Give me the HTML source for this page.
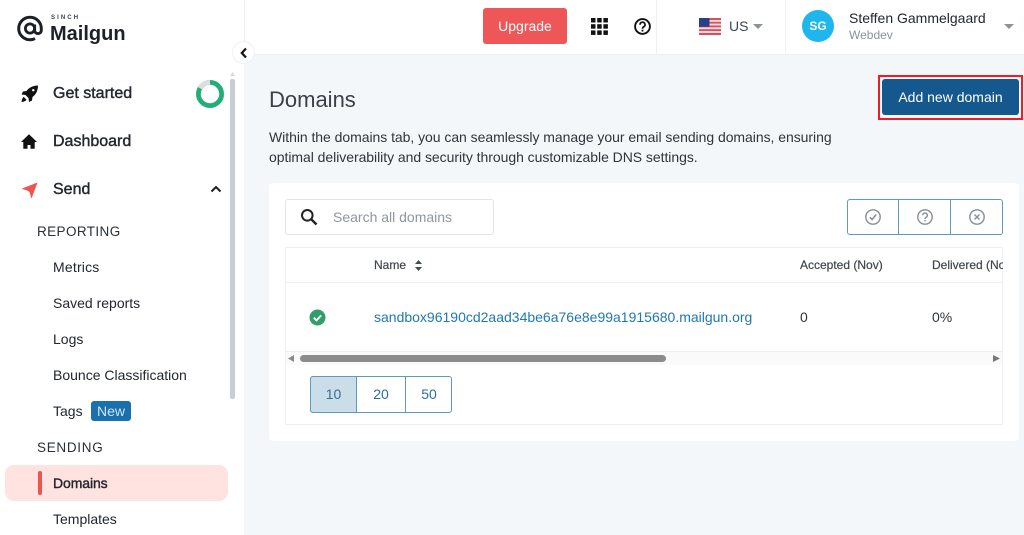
<!DOCTYPE html>
<html><head><meta charset="utf-8"><style>
html,body{margin:0;padding:0}
body{width:1024px;height:535px;overflow:hidden;position:relative;background:#f4f7fa;font-family:"Liberation Sans",sans-serif;color:#22272e}
.a{position:absolute;white-space:nowrap}
.t{position:absolute;white-space:nowrap;line-height:20px;font-size:14px}
svg{position:absolute;overflow:visible}
.nav{font-size:16px;font-weight:400;-webkit-text-stroke:.4px #22272e;color:#22272e}
.sec{font-size:13.500px;color:#2b3036}
</style></head><body>
<div class="a" style="left:0;top:0;width:244px;height:535px;background:#fff"></div>
<div class="a" style="left:244px;top:0;width:780px;height:54px;background:#fff;border-bottom:1px solid #eceff2"></div>
<div class="a" style="left:244px;top:0;width:1px;height:54px;background:#eceff2"></div>
<div class="a" style="left:656px;top:0;width:1px;height:54px;background:#eef0f3"></div>
<div class="a" style="left:785px;top:0;width:1px;height:54px;background:#eef0f3"></div>

<!-- logo -->
<svg style="left:17px;top:15px" width="27" height="27" viewBox="0 0 27 27"><circle cx="13" cy="13.500" r="4.600" fill="none" stroke="#1d2127" stroke-width="2.800"/><path d="M17.600 9.500v6a3.300 3.300 0 0 0 6.700-.5v-1.500A11.300 11.300 0 1 0 13 24.800c2 0 3.500-.4 5-1.200" fill="none" stroke="#1d2127" stroke-width="3"/></svg>
<div class="a" style="left:51px;top:14px;font-size:6px;line-height:9px;font-weight:700;letter-spacing:2.100px;color:#3a3f45">SINCH</div>
<div class="a" style="left:50px;top:22px;font-size:20px;line-height:24px;font-weight:700;color:#1d2127">Mailgun</div>

<!-- collapse -->
<div class="a" style="left:232px;top:41px;width:23px;height:23px;border-radius:50%;background:#fff;border:1px solid #eef0f3;box-sizing:border-box"></div>
<svg style="left:239px;top:47px" width="10" height="12" viewBox="0 0 10 12"><path d="M7 1.500L2.800 6 7 10.500" fill="none" stroke="#111" stroke-width="2.200"/></svg>

<!-- side scrollbar -->
<div class="a" style="left:230px;top:79px;width:5px;height:320px;background:#c7ced5;border-radius:2px"></div>
<svg style="left:230px;top:72px" width="5" height="4"><path d="M0 4L2.500 0 5 4z" fill="#d5dae0"/></svg>

<!-- nav icons -->
<svg style="left:21px;top:85px" width="17" height="18" viewBox="0 0 17 18"><path d="M17 .5C12 .5 8 2.500 5.500 6L2 6.500.5 9.500l4 .5 3 3 .5 4 3-1.500.5-3.500C15 9.500 17 5.500 17 .5z" fill="#111"/><circle cx="12.300" cy="5.200" r="1.200" fill="#fff"/><path d="M2.800 12c-1.200.5-2 2.500-2.300 5 2.500-.3 4.300-1 5-2.300z" fill="#111"/></svg>
<svg style="left:21px;top:134px" width="16" height="15" viewBox="0 0 16 15"><path d="M8 .3L0 8h2.300v6.800h4.200V11h3v3.800h4.200V8H16z" fill="#111"/></svg>
<svg style="left:21px;top:182px" width="17" height="17" viewBox="0 0 17 17"><path d="M16.500.5L.5 6.800 6 8.400 8.500 10l2 6.500z" fill="#ef5350"/></svg>

<div class="t nav" style="left:53px;top:84px">Get started</div>
<div class="t nav" style="left:53px;top:132px">Dashboard</div>
<div class="t nav" style="left:53px;top:180px">Send</div>

<svg style="left:196px;top:80px" width="28" height="28" viewBox="0 0 28 28"><circle cx="14" cy="14" r="11.600" fill="none" stroke="#22ae78" stroke-width="4.800"/><path d="M3.950 8.200A11.600 11.600 0 0 1 14 2.400" fill="none" stroke="#dcdfe0" stroke-width="4.800"/></svg>
<svg style="left:210px;top:185px" width="12" height="8" viewBox="0 0 12 8"><path d="M1.500 6.500L6 2l4.500 4.500" fill="none" stroke="#1b1f24" stroke-width="2"/></svg>

<div class="t sec" style="left:37px;top:222px;letter-spacing:.4px">REPORTING</div>
<div class="t" style="left:53px;top:257px;letter-spacing:.2px">Metrics</div>
<div class="t" style="left:53px;top:293px">Saved reports</div>
<div class="t" style="left:53px;top:329px">Logs</div>
<div class="t" style="left:53px;top:365px">Bounce Classification</div>
<div class="t" style="left:53px;top:401px">Tags</div>
<div class="a" style="left:91px;top:401px;width:40px;height:20px;background:#1a6fad;border-radius:3px;color:#cfe6f7;font-size:14px;line-height:20px;text-align:center">New</div>
<div class="t sec" style="left:37px;top:438px;letter-spacing:.7px">SENDING</div>
<div class="a" style="left:5px;top:465px;width:223px;height:36px;background:#ffe3e1;border-radius:9px"></div>
<div class="a" style="left:38px;top:471px;width:4px;height:24px;background:#ef5350;border-radius:2px"></div>
<div class="t" style="left:53px;top:473px;-webkit-text-stroke:.4px #22272e;letter-spacing:-.1px">Domains</div>
<div class="t" style="left:53px;top:509px">Templates</div>

<!-- topbar -->
<div class="a" style="left:483px;top:8px;width:84px;height:36px;background:#ef5658;border-radius:3px;color:#fff;font-size:14px;line-height:36px;text-align:center">Upgrade</div>
<svg style="left:591px;top:18px" width="17" height="17" viewBox="0 0 17 17" fill="#111"><rect x="0" y="0" width="4.500" height="4.500"/><rect x="6.200" y="0" width="4.500" height="4.500"/><rect x="12.400" y="0" width="4.500" height="4.500"/><rect x="0" y="6.200" width="4.500" height="4.500"/><rect x="6.200" y="6.200" width="4.500" height="4.500"/><rect x="12.400" y="6.200" width="4.500" height="4.500"/><rect x="0" y="12.400" width="4.500" height="4.500"/><rect x="6.200" y="12.400" width="4.500" height="4.500"/><rect x="12.400" y="12.400" width="4.500" height="4.500"/></svg>
<svg style="left:634px;top:18px" width="17" height="17" viewBox="0 0 17 17"><circle cx="8.500" cy="8.500" r="7.400" fill="none" stroke="#111" stroke-width="1.900"/><path d="M6 6.700a2.500 2.500 0 1 1 3.700 2.200c-.8.500-1.200 1-1.200 1.900" fill="none" stroke="#111" stroke-width="1.700"/><rect x="7.600" y="11.700" width="1.800" height="1.800" fill="#111"/></svg>
<svg style="left:699px;top:18px" width="22" height="17" viewBox="0 0 22 17"><rect width="22" height="17" fill="#f3dcdc"/><g fill="#d8505a"><rect y="0" width="22" height="2"/><rect y="3.800" width="22" height="1.800"/><rect y="7.500" width="22" height="1.800"/><rect y="11.200" width="22" height="1.800"/><rect y="15" width="22" height="2"/></g><rect width="10.500" height="8.800" fill="#2b3f87"/></svg>
<div class="t" style="left:729px;top:16px;color:#3d4651">US</div>
<svg style="left:753px;top:24px" width="10" height="5"><path d="M0 0h10L5 5z" fill="#8a929b"/></svg>
<div class="a" style="left:802px;top:10px;width:32px;height:32px;border-radius:50%;background:#1eb6ec;color:#fff;font-size:12px;font-weight:700;line-height:32px;text-align:center">SG</div>
<div class="t" style="left:849px;top:8px;color:#22272e">Steffen Gammelgaard</div>
<div class="t" style="left:849px;top:25px;font-size:12px;color:#8b929a">Webdev</div>
<svg style="left:1004px;top:24px" width="10" height="5"><path d="M0 0h10L5 5z" fill="#8a929b"/></svg>

<!-- header -->
<div class="a" style="left:269px;top:87px;font-size:22px;line-height:26px;color:#3a4048">Domains</div>
<div class="a" style="left:269px;top:127px;font-size:14px;line-height:20px;letter-spacing:-.046px;color:#2f353c;width:590px;white-space:normal">Within the domains tab, you can seamlessly manage your email sending domains, ensuring<br>optimal deliverability and security through customizable DNS settings.</div>
<div class="a" style="left:878px;top:75px;width:145px;height:45px;border:2px solid #ee1c25;box-sizing:border-box"></div>
<div class="a" style="left:882px;top:79px;width:137px;height:36px;background:#15588e;border-radius:3px;color:#fff;font-size:14px;line-height:36px;text-align:center">Add new domain</div>

<!-- card -->
<div class="a" style="left:269px;top:183px;width:750px;height:258px;background:#fff;border-radius:4px"></div>
<div class="a" style="left:285px;top:199px;width:209px;height:36px;border:1px solid #dfe5eb;border-radius:3px;box-sizing:border-box;background:#fff"></div>
<svg style="left:300px;top:208px" width="18" height="18" viewBox="0 0 18 18"><circle cx="7.300" cy="7.300" r="5.300" fill="none" stroke="#222" stroke-width="2"/><path d="M11 11l5.500 5.500" stroke="#222" stroke-width="2.400"/></svg>
<div class="t" style="left:333px;top:207px;color:#8f969e">Search all domains</div>

<div class="a" style="left:847px;top:199px;width:156px;height:36px;border:1px solid #5d9abf;border-radius:3px;box-sizing:border-box"></div>
<div class="a" style="left:898px;top:199px;width:1px;height:36px;background:#5d9abf"></div>
<div class="a" style="left:950px;top:199px;width:1px;height:36px;background:#5d9abf"></div>
<svg style="left:864px;top:208px" width="18" height="18" viewBox="0 0 18 18"><circle cx="9" cy="9" r="7.200" fill="none" stroke="#878e95" stroke-width="1.400"/><path d="M5.800 9.300l2.300 2.300 4-5" fill="none" stroke="#878e95" stroke-width="1.600"/></svg>
<svg style="left:916px;top:208px" width="18" height="18" viewBox="0 0 18 18"><circle cx="9" cy="9" r="7.200" fill="none" stroke="#878e95" stroke-width="1.400"/><path d="M6.700 7.300a2.300 2.300 0 1 1 3.400 2c-.8.400-1.100.9-1.100 1.700" fill="none" stroke="#878e95" stroke-width="1.400"/><rect x="8.300" y="12" width="1.400" height="1.400" fill="#878e95"/></svg>
<svg style="left:968px;top:208px" width="18" height="18" viewBox="0 0 18 18"><circle cx="9" cy="9" r="7.200" fill="none" stroke="#878e95" stroke-width="1.400"/><path d="M6.500 6.500l5 5m0-5l-5 5" fill="none" stroke="#878e95" stroke-width="1.400"/></svg>

<!-- table -->
<div class="a" style="left:285px;top:247px;width:718px;height:178px;border:1px solid #eef0f3;box-sizing:border-box"></div>
<div class="a" style="left:285px;top:282px;width:718px;height:1px;background:#eef0f3"></div>
<div class="a" style="left:285px;top:351px;width:718px;height:1px;background:#eceff2"></div>
<div class="a" style="left:286px;top:352px;width:716px;height:13px;background:#fafafa"></div>
<div class="t" style="left:374px;top:255px;font-size:12px;color:#3f454c;-webkit-text-stroke:.2px #3f454c">Name</div>
<svg style="left:415px;top:260px" width="7" height="11"><path d="M0 4L3.500 0 7 4zM0 7h7l-3.500 4z" fill="#444b52"/></svg>
<div class="t" style="left:800px;top:255px;font-size:12px;color:#3f454c;-webkit-text-stroke:.2px #3f454c">Accepted (Nov)</div>
<div class="a" style="left:932px;top:255px;width:71px;overflow:hidden;font-size:12px;line-height:20px;color:#3f454c;-webkit-text-stroke:.2px #3f454c">Delivered (Nov)</div>
<svg style="left:309px;top:309px" width="17" height="17" viewBox="0 0 17 17"><circle cx="8.500" cy="8.500" r="8" fill="#2f9e6b"/><path d="M4.800 8.700l2.700 2.700 4.700-5" fill="none" stroke="#fff" stroke-width="1.900"/></svg>
<div class="t" style="left:374px;top:307px;color:#1f78b4">sandbox96190cd2aad34be6a76e8e99a1915680.mailgun.org</div>
<div class="t" style="left:800px;top:307px;color:#2f353c">0</div>
<div class="t" style="left:932px;top:307px;color:#2f353c">0%</div>

<svg style="left:288px;top:355px" width="6" height="7"><path d="M6 0v7L0 3.500z" fill="#8a8a8a"/></svg>
<div class="a" style="left:300px;top:355px;width:366px;height:7px;background:#8c8c8c;border-radius:4px"></div>
<svg style="left:993px;top:355px" width="7" height="7"><path d="M0 0v7l7-3.500z" fill="#777"/></svg>

<div class="a" style="left:310px;top:376px;width:142px;height:37px;border:1px solid #5d9abf;border-radius:3px;box-sizing:border-box"></div>
<div class="a" style="left:310px;top:376px;width:47px;height:37px;background:#cbdde8;border:1px solid #5d9abf;border-radius:3px 0 0 3px;box-sizing:border-box;color:#3b6d92;font-size:14px;line-height:35px;text-align:center">10</div>
<div class="a" style="left:405px;top:376px;width:1px;height:37px;background:#5d9abf"></div>
<div class="a" style="left:357px;top:376px;width:48px;height:37px;color:#2f6c99;font-size:14px;line-height:37px;text-align:center">20</div>
<div class="a" style="left:406px;top:376px;width:46px;height:37px;color:#2f6c99;font-size:14px;line-height:37px;text-align:center">50</div>
</body></html>
